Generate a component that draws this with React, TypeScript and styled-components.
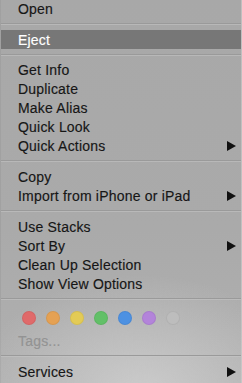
import React from "react";
import styled, { createGlobalStyle } from "styled-components";

const Global = createGlobalStyle`
  html, body { margin: 0; padding: 0; }
  body { width: 242px; height: 383px; overflow: hidden; background: #a9a9a9; }
`;

const Menu = styled.div`
  width: 242px;
  height: 383px;
  box-sizing: border-box;
  overflow: hidden;
  display: flex;
  flex-direction: column;
  font-family: "Liberation Sans", Arial, sans-serif;
  font-size: 14px;
  letter-spacing: 0.2px;
  -webkit-text-stroke: 0.15px currentColor;
  color: #161616;
  background:
    radial-gradient(ellipse 170px 120px at 140px 395px, rgba(205, 205, 205, 0.95), rgba(205, 205, 205, 0) 100%),
    linear-gradient(#a8a8a8, #aaaaaa 60%, #b0b0b0);
  border-right: 1px solid rgba(235, 235, 235, 0.35);
  border-left: 1px solid rgba(150, 150, 150, 0.4);
`;

const Item = styled.div<{ $active?: boolean; $disabled?: boolean; $h?: number }>`
  flex: none;
  height: ${(p) => p.$h ?? 19}px;
  display: flex;
  align-items: center;
  justify-content: space-between;
  padding: 0 5px 0 17px;
  background: ${(p) => (p.$active ? "#777777" : "transparent")};
  color: ${(p) => (p.$active ? "#ffffff" : p.$disabled ? "#939393" : "#161616")};
  white-space: nowrap;
`;

const Arrow = styled.span`
  width: 0;
  height: 0;
  border-top: 5px solid transparent;
  border-bottom: 5px solid transparent;
  border-left: 9px solid #111;
`;

const Separator = styled.div<{ $h?: number }>`
  flex: none;
  height: ${(p) => p.$h ?? 12}px;
  display: flex;
  flex-direction: column;
  justify-content: center;
  &::before {
    content: "";
    display: block;
    height: 1px;
    background: #9a9a9a;
  }
  &::after {
    content: "";
    display: block;
    height: 1px;
    background: rgba(200, 200, 200, 0.5);
  }
`;

const Dots = styled.div`
  flex: none;
  height: 26px;
  display: flex;
  align-items: center;
  gap: 10px;
  padding-left: 21px;
`;

const Dot = styled.span<{ $c: string }>`
  box-sizing: border-box;
  width: 14px;
  height: 14px;
  border-radius: 50%;
  background: ${(p) => p.$c};
  border: 1px solid rgba(0, 0, 0, 0.06);
`;

const colors = ["#e06a6a", "#e5a153", "#e3cb56", "#62c068", "#4d91e2", "#b384da", "#bdbdbd"];

type Entry = { label: string; sub?: boolean };

const group = (items: Entry[]) =>
  items.map((it) => (
    <Item key={it.label}>
      <span>{it.label}</span>
      {it.sub && <Arrow />}
    </Item>
  ));

export default function App() {
  return (
    <>
      <Global />
      <Menu>
        <Item $h={17}>
          <span>Open</span>
        </Item>
        <Separator $h={13} />
        <Item $active>
          <span>Eject</span>
        </Item>
        <Separator $h={11} />
        {group([
          { label: "Get Info" },
          { label: "Duplicate" },
          { label: "Make Alias" },
          { label: "Quick Look" },
          { label: "Quick Actions", sub: true },
        ])}
        <Separator />
        {group([{ label: "Copy" }, { label: "Import from iPhone or iPad", sub: true }])}
        <Separator />
        {group([
          { label: "Use Stacks" },
          { label: "Sort By", sub: true },
          { label: "Clean Up Selection" },
          { label: "Show View Options" },
        ])}
        <Separator />
        <Dots>
          {colors.map((c) => (
            <Dot key={c} $c={c} />
          ))}
        </Dots>
        <Item $disabled>
          <span>Tags...</span>
        </Item>
        <Separator />
        {group([{ label: "Services", sub: true }])}
      </Menu>
    </>
  );
}
